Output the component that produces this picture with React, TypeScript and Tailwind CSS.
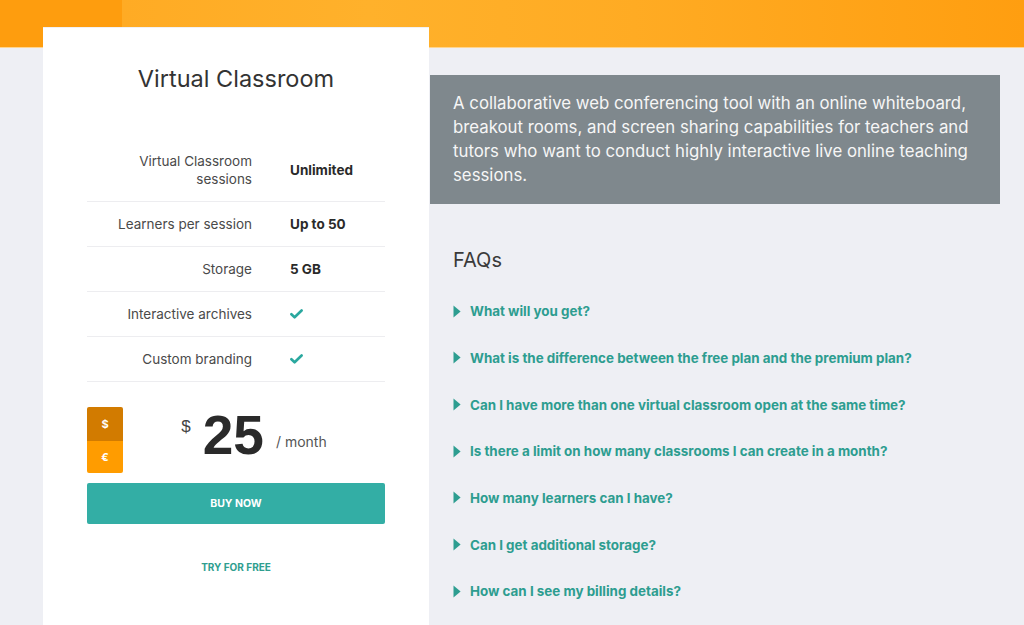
import React from 'react';

const features = [
  { label: 'Virtual Classroom sessions', value: 'Unlimited' },
  { label: 'Learners per session', value: 'Up to 50' },
  { label: 'Storage', value: '5 GB' },
  { label: 'Interactive archives', value: 'check' },
  { label: 'Custom branding', value: 'check' },
];

const faqs = [
  'What will you get?',
  'What is the difference between the free plan and the premium plan?',
  'Can I have more than one virtual classroom open at the same time?',
  'Is there a limit on how many classrooms I can create in a month?',
  'How many learners can I have?',
  'Can I get additional storage?',
  'How can I see my billing details?',
];

const Check = () => (
  <svg width="13" height="10" viewBox="0 0 13 10" className="block">
    <path d="M1.4 5.2 L4.6 8.3 L11.6 1.5" fill="none" stroke="#2aa89f" strokeWidth="2.6" strokeLinecap="round" strokeLinejoin="round" />
  </svg>
);

const Caret = () => (
  <svg width="8" height="13" viewBox="0 0 8 13" className="block shrink-0">
    <path d="M0.5 0.6 L7.6 6.5 L0.5 12.4 Z" fill="#2d9d90" />
  </svg>
);

const App = () => {
  return (
    <div className="h-[625px] w-full overflow-hidden bg-[#eeeff4] font-['Inter',sans-serif]">
      {/* Orange banner */}
      <div className="h-[48px] w-full bg-[linear-gradient(90deg,#fe9d0e_0px,#fe9d0e_122px,#ffab24_122px,#ffb12b_36%,#ffab23_62%,#ff9e10_100%)] border-b border-[#ffd58f]" />

      <div className="flex pl-[43px]">
        {/* Pricing card */}
        <div className="-mt-[21px] w-[386px] shrink-0 bg-white px-[44px] pt-[37px] pb-[80px] border-t border-[#f1f1f4]">
          <h1 className="text-center text-[23.5px] leading-[28px] text-[#333] font-normal">Virtual Classroom</h1>

          <div className="mt-[46px] w-[298px]">
            {features.map((f) => (
              <div key={f.label} className="flex items-center border-b border-[#ededf0] py-[13px]">
                <div className="w-[184px] shrink-0 pr-[19px] flex justify-end">
                  <span className="max-w-[150px] text-right text-[13.5px] leading-[18px] text-[#4a4a4a]">{f.label}</span>
                </div>
                <div className="pl-[19px] text-[13.5px] leading-[18px] font-bold text-[#2a2a2a]">
                  {f.value === 'check' ? <Check /> : f.value}
                </div>
              </div>
            ))}
          </div>

          {/* Price */}
          <div className="mt-[25px] flex w-[298px] items-start">
            <div className="flex w-[36px] flex-col rounded-[2px] overflow-hidden text-white text-[11px] font-bold">
              <div className="flex h-[34px] items-center justify-center bg-[#d27b00]">$</div>
              <div className="flex h-[32px] items-center justify-center bg-[#ff9c00]">€</div>
            </div>
            <div className="flex flex-1 justify-center items-start pt-[1px]">
              <span className="mt-[9px] text-[17px] leading-[20px] text-[#444] font-['Liberation_Sans',sans-serif]">$</span>
              <span className="ml-[12px] text-[55px] leading-none font-bold text-[#2a2a2a] font-['Liberation_Sans',sans-serif]">25</span>
              <span className="ml-[12px] mt-[25px] text-[14px] leading-[18px] text-[#555]">/ month</span>
            </div>
          </div>

          <button className="mt-[10px] flex h-[41px] w-[298px] items-center justify-center rounded-[2px] bg-[#33aea5] text-[10.5px] font-bold text-white">
            BUY NOW
          </button>

          <div className="mt-[36px] text-center text-[10px] leading-[14px] font-bold text-[#2f9e8f]">
            TRY FOR FREE
          </div>
        </div>

        {/* Right column */}
        <div className="ml-[1px] w-[570px] pt-[27px]">
          <div className="bg-[#7f888d] pl-[23px] pr-[22px] pt-[16px] pb-[17px] text-[16.8px] leading-[24px] text-[#f6f6f6]">
            A collaborative web conferencing tool with an online whiteboard, breakout rooms, and screen sharing capabilities for teachers and tutors who want to conduct highly interactive live online teaching sessions.
          </div>

          <div className="pl-[23px]">
            <h2 className="mt-[42px] text-[20px] leading-[28px] text-[#3a3a3a] font-normal">FAQs</h2>
            <div className="mt-[14px] flex flex-col">
              {faqs.map((q) => (
                <div key={q} className="flex h-[46.67px] items-center gap-[9px]">
                  <Caret />
                  <span className="text-[13.4px] leading-[18px] font-bold text-[#2d9d90]">{q}</span>
                </div>
              ))}
            </div>
          </div>
        </div>
      </div>
    </div>
  );
};

export default App;
